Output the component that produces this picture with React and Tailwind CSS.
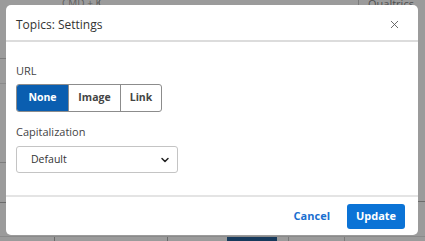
import { X, ChevronDown } from 'lucide-react';

const OPTIONS = [
  { label: 'None', width: 'w-[51px]' },
  { label: 'Image', width: 'w-[52px]' },
  { label: 'Link', width: 'flex-1' }
];

const BOTTOM_CELLS = [
  'w-[55px] border-r border-[#6a6a6a]',
  'w-[113px] border-r border-[#6a6a6a]',
  'w-[59px]',
  'w-[50px] bg-[#173a5c]',
  'w-[12px] border-r border-[#7a7a7a]',
  'w-[56px] border-r border-[#7a7a7a]',
  'flex-1'
];

export default function App() {
  return (
    <div className="relative h-[241px] w-[425px] overflow-hidden bg-[#9b9b9b] font-['Open_Sans',sans-serif]">
      {/* dimmed page behind the dialog */}
      <div className="flex h-full flex-col">
        <div className="flex h-[5px] items-start">
          <span className="ml-[62px] w-[38px] whitespace-nowrap border-r border-[#6f6f6f] text-[10px] leading-[6px] text-[#5f5f5f]">CMD + K</span>
          <span className="ml-[258px] h-full w-px bg-[#7a7a7a]" />
          <span className="ml-[9px] whitespace-nowrap text-[11px] leading-[7px] text-[#4f4f4f]">Qualtrics</span>
        </div>
        <div className="flex flex-1 justify-between">
          <div className="flex w-[6px] flex-col">
            <span className="mt-[53px] h-px bg-[#7c7c7c]" />
            <span className="mt-[24px] h-px bg-[#8a8a8a]" />
            <span className="mt-[78px] h-px bg-[#7c7c7c]" />
            <span className="mt-[39px] h-px bg-[#6c6c6c]" />
          </div>
          <div className="flex w-[8px] flex-col">
            <span className="mt-[196px] h-px bg-[#6c6c6c]" />
          </div>
        </div>
        <div className="flex h-[5px] border-t border-[#8a8a8a]">
          {BOTTOM_CELLS.map((c, i) => (
            <span key={i} className={c} />
          ))}
        </div>
      </div>

      <div className="absolute left-[6px] top-[5px] flex h-[230px] w-[412px] flex-col rounded-[5px] bg-white">
        <div className="flex h-[37px] items-center justify-between border-b-2 border-[#dcdcdc] pl-[10px] pr-[17px] pt-[4px]">
          <span className="text-[12px] text-[#333]">Topics: Settings</span>
          <X size={13} strokeWidth={1.6} className="text-[#555]" />
        </div>

        <div className="flex flex-1 flex-col px-[10px] pt-[22px]">
          <span className="text-[11px] leading-[14px] text-[#444]">URL</span>
          <div className="mt-[6px] flex h-[28px] w-[146px] overflow-hidden rounded-[3px] border border-[#8c8c8c]">
            {OPTIONS.map((opt, i) => (
              <span
                key={opt.label}
                className={
                  i === 0
                    ? `flex ${opt.width} items-center justify-center bg-[#0a5eb0] text-[10.5px] font-bold text-white`
                    : `flex ${opt.width} items-center justify-center border-l border-[#8c8c8c] text-[10.5px] font-bold text-[#444]`
                }
              >
                {opt.label}
              </span>
            ))}
          </div>
          <span className="mt-[13px] text-[11px] leading-[14px] text-[#444]">Capitalization</span>
          <div className="mt-[7px] flex h-[27px] w-[162px] items-center justify-between rounded-[3px] border border-[#c4c4c4] pl-[14px] pr-[6px]">
            <span className="text-[10.5px] text-[#333]">Default</span>
            <ChevronDown size={12} strokeWidth={3} className="text-[#222]" />
          </div>
        </div>

        <div className="flex h-[40px] items-center justify-end gap-[17px] border-t-2 border-[#e4e4e4] pr-[13px]">
          <span className="text-[11px] font-bold text-[#1a6fd0]">Cancel</span>
          <span className="flex h-[25px] w-[58px] items-center justify-center rounded-[3px] bg-[#0b73d6] text-[11px] font-bold text-white">
            Update
          </span>
        </div>
      </div>
    </div>
  );
}
